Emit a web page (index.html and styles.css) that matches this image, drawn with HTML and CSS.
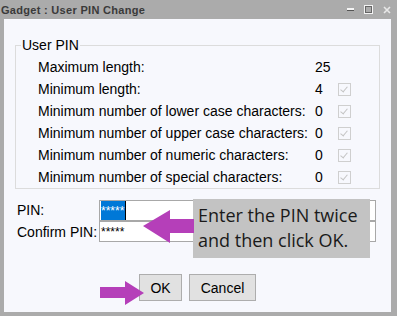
FILE: index.html
```html
<!DOCTYPE html>
<html lang="en">
<head>
<meta charset="UTF-8">
<title>Gadget : User PIN Change</title>
<link rel="stylesheet" href="styles.css">
</head>
<body>
<div class="window">
  <div class="titlebar">
    <span class="title">Gadget : User PIN Change</span>
    <div class="winButtons">
      <svg width="8" height="4" viewBox="0 0 8 4"><rect x="0" y="0" width="7" height="3" fill="#f4f4f4"/><rect x="0" y="2" width="7" height="1" fill="#555"/></svg>
      <svg width="10" height="10" viewBox="0 0 10 10"><rect x="0.5" y="0.5" width="8" height="8" fill="none" stroke="#f4f4f4"/><rect x="1.5" y="1.5" width="6" height="6" fill="none" stroke="#666"/></svg>
      <svg width="8" height="8" viewBox="0 0 8 8"><path d="M1 1 L7 7 M7 1 L1 7" stroke="#e8e8e8" stroke-width="1.6"/></svg>
    </div>
  </div>
  <div class="content">
    <fieldset class="group">
      <legend>User PIN</legend>
      <div class="row"><span class="label">Maximum length:</span><span class="value">25</span></div>
      <div class="row"><span class="label">Minimum length:</span><span class="value">4</span><span class="check"></span></div>
      <div class="row"><span class="label">Minimum number of lower case characters:</span><span class="value">0</span><span class="check"></span></div>
      <div class="row"><span class="label">Minimum number of upper case characters:</span><span class="value">0</span><span class="check"></span></div>
      <div class="row"><span class="label">Minimum number of numeric characters:</span><span class="value">0</span><span class="check"></span></div>
      <div class="row"><span class="label">Minimum number of special characters:</span><span class="value">0</span><span class="check"></span></div>
    </fieldset>
    <div class="pinRow">
      <span class="pinLabel">PIN:</span>
      <div class="field"><span class="selected">*****</span><span class="caret"></span></div>
    </div>
    <div class="pinRow">
      <span class="pinLabel">Confirm PIN:</span>
      <div class="field">*****</div>
    </div>
    <div class="buttons">
      <button class="btn ok">OK</button>
      <button class="btn cancel">Cancel</button>
    </div>
    <div class="callout">Enter the PIN twice<br>and then click OK.</div>
    <svg class="arrow arrowLeft" width="51" height="33" viewBox="0 0 51 33"><polygon points="0,16 27,0 27,9 51,9 51,23 27,23 27,33" fill="#b53fb9"/></svg>
    <svg class="arrow arrowRight" width="44" height="24" viewBox="0 0 44 24"><polygon points="0,6 25,6 25,0 44,12 25,24 25,17 0,17" fill="#b53fb9"/></svg>
  </div>
</div>
</body>
</html>
```

FILE: styles.css
```css
body {
  margin: 0;
  background-color: #ababab;
  font-family: 'Liberation Sans', Arial, sans-serif;
  font-size: 14px;
  color: #000;
}
.window {
  width: 397px;
  height: 316px;
  overflow: hidden;
}
.titlebar {
  height: 19px;
  display: flex;
  align-items: center;
  justify-content: space-between;
  padding-left: 1px;
}
.title {
  font-family: 'Liberation Sans', sans-serif;
  font-weight: bold;
  font-size: 11px;
  letter-spacing: 0.3px;
  color: #3a3a3a;
}
.winButtons {
  display: flex;
  align-items: center;
  gap: 9px;
  padding-right: 6px;
}
.content {
  position: relative;
  margin: 0 6px 0 4px;
  height: 293px;
  background-color: #f7f8fd;
  box-sizing: border-box;
  padding-top: 18px;
}
.group {
  margin: 0 11px 0 11px;
  padding: 3px 0 4px 22px;
  border: 1px solid #dcdcdc;
  height: 152px;
  box-sizing: border-box;
}
.group legend {
  padding: 0 1px;
  margin-left: -17px;
  font-size: 14px;
}
.row {
  display: flex;
  align-items: center;
  height: 22px;
}
.label {
  width: 277px;
  white-space: nowrap;
}
.value {
  width: 23px;
}
.check {
  width: 11px;
  height: 11px;
  border: 1px solid #cfcfcf;
  background-color: #f7f8fd;
  position: relative;
}
.check::after {
  content: '';
  position: absolute;
  left: 3px;
  top: 1px;
  width: 3px;
  height: 6px;
  border-right: 1px solid #c4c4c4;
  border-bottom: 1px solid #c4c4c4;
  transform: rotate(40deg);
}
.pinRow {
  display: flex;
  align-items: center;
  height: 21px;
  margin-left: 13px;
}
.group + .pinRow {
  margin-top: 10px;
  height: 22px;
}
.pinLabel {
  width: 82px;
}
.field {
  width: 274px;
  height: 19px;
  border: 1px solid #a8a8a8;
  background-color: #fff;
  display: flex;
  align-items: center;
  font-size: 12px;
  padding-left: 1px;
}
.selected {
  background-color: #0078d7;
  color: #fff;
  height: 19px;
  line-height: 21px;
  padding-right: 1px;
}
.caret {
  width: 1px;
  height: 19px;
  background-color: #000;
}
.buttons {
  display: flex;
  justify-content: center;
  gap: 7px;
  margin-top: 32px;
}
.btn {
  font-family: 'Liberation Sans', Arial, sans-serif;
  font-size: 14px;
  height: 27px;
  background-color: #e1e1e1;
  border: 1px solid #adadad;
  padding: 0;
  color: #000;
}
.ok {
  width: 43px;
}
.cancel {
  width: 67px;
}
.callout {
  position: absolute;
  left: 189px;
  top: 180px;
  width: 177px;
  height: 59px;
  box-sizing: border-box;
  padding: 4px 0 0 5px;
  background-color: #c3c3c3;
  font-family: 'Open Sans', sans-serif;
  font-size: 18px;
  line-height: 25px;
  color: #1a1a1a;
  white-space: nowrap;
}
.arrow {
  position: absolute;
}
.arrowLeft {
  left: 139px;
  top: 191px;
}
.arrowRight {
  left: 96px;
  top: 262px;
}
```
